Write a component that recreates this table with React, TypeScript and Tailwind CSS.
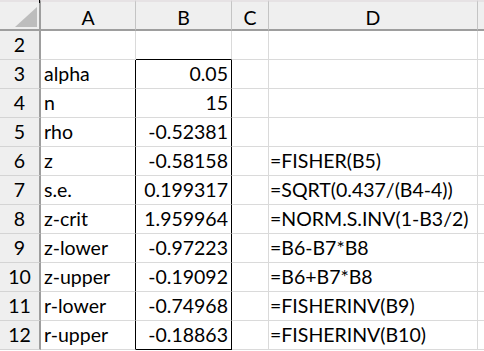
import React from "react";

const rows: { n: number; a: string; b: string; d: string }[] = [
  { n: 2, a: "", b: "", d: "" },
  { n: 3, a: "alpha", b: "0.05", d: "" },
  { n: 4, a: "n", b: "15", d: "" },
  { n: 5, a: "rho", b: "-0.52381", d: "" },
  { n: 6, a: "z", b: "-0.58158", d: "=FISHER(B5)" },
  { n: 7, a: "s.e.", b: "0.199317", d: "=SQRT(0.437/(B4-4))" },
  { n: 8, a: "z-crit", b: "1.959964", d: "=NORM.S.INV(1-B3/2)" },
  { n: 9, a: "z-lower", b: "-0.97223", d: "=B6-B7*B8" },
  { n: 10, a: "z-upper", b: "-0.19092", d: "=B6+B7*B8" },
  { n: 11, a: "r-lower", b: "-0.74968", d: "=FISHERINV(B9)" },
  { n: 12, a: "r-upper", b: "-0.18863", d: "=FISHERINV(B10)" },
];

export default function App() {
  return (
    <div
      className="w-[484px] h-[351px] bg-white overflow-hidden text-black text-[19.5px]"
      style={{ fontFamily: "Lato, 'Liberation Sans', sans-serif" }}
    >
      <div className="grid grid-cols-[41px_95px_96px_37px_209px_1fr]">
        {/* Header row */}
        <div className="relative h-[31px] bg-[#efefef] border-t-2 border-t-[#e6e2e4] border-b-2 border-b-[#9e9e9e] border-r-2 border-r-[#9e9e9e]">
          <svg className="absolute left-0 top-[-2px]" width="39" height="29" viewBox="0 0 39 29">
            <polygon points="15,27 37,27 37,7" fill="#bdbdbd" />
          </svg>
          <div className="absolute left-[39px] top-[-2px] w-px h-[3px] bg-black" />
        </div>
        {["A", "B", "C", "D", ""].map((h, i) => (
          <div
            key={i}
            className={`h-[31px] bg-[#efefef] border-t-2 border-t-[#e6e2e4] border-b-2 border-b-[#9e9e9e] flex items-end justify-center leading-[23px] ${i < 4 ? "border-r border-r-[#c4c4c4]" : ""}`}
          >
            {h}
          </div>
        ))}

        {rows.map((r) => {
          const inBox = r.n >= 3;
          const topBox = r.n === 2;
          const bottomBox = r.n === 12;
          return (
            <React.Fragment key={r.n}>
              <div className="h-[29px] bg-[#efefef] border-r-2 border-r-[#9e9e9e] border-b border-b-[#d4d4d4] flex items-end justify-center pb-[3px] leading-[23px]">
                {r.n}
              </div>
              <div
                className={`h-[29px] border-b border-b-[#dadada] border-r flex items-end pl-[3px] pb-[3px] leading-[23px] whitespace-nowrap ${inBox ? "border-r-black" : "border-r-[#dadada]"}`}
              >
                {r.a}
              </div>
              <div
                className={`h-[29px] border-b border-r flex items-end justify-end pr-[3px] pb-[3px] leading-[23px] whitespace-nowrap ${inBox ? "border-r-black" : "border-r-[#dadada]"} ${topBox || bottomBox ? "border-b-black" : "border-b-[#dadada]"}`}
              >
                {r.b}
              </div>
              <div className="h-[29px] border-b border-b-[#dadada] border-r border-r-[#dadada]" />
              <div className="h-[29px] border-b border-b-[#dadada] border-r border-r-[#dadada] flex items-end pl-[1px] pb-[3px] leading-[23px] whitespace-nowrap overflow-hidden">
                {r.d}
              </div>
              <div className="h-[29px] border-b border-b-[#dadada]" />
            </React.Fragment>
          );
        })}
      </div>
    </div>
  );
}
